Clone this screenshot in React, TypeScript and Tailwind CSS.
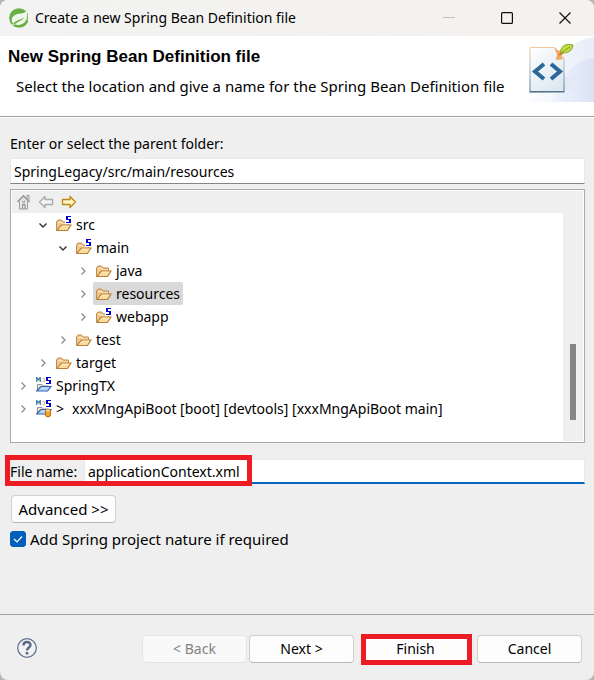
import { useState } from "react";
import type { ReactNode } from "react";

type Kind = "folder" | "source" | "project" | "database";

type Node = { name: string; level: number; kind: Kind; open?: boolean; changed?: boolean };

const nodes: Node[] = [
  { name: "src", level: 1, kind: "source", open: true },
  { name: "main", level: 2, kind: "source", open: true },
  { name: "java", level: 3, kind: "folder" },
  { name: "resources", level: 3, kind: "folder" },
  { name: "webapp", level: 3, kind: "source" },
  { name: "test", level: 2, kind: "folder" },
  { name: "target", level: 1, kind: "folder" },
  { name: "SpringTX", level: 0, kind: "project" },
  { name: "xxxMngApiBoot [boot] [devtools] [xxxMngApiBoot main]", level: 0, kind: "database", changed: true },
];

const indents = ["pl-[3px]", "pl-[23px]", "pl-[43px]", "pl-[63px]"];

function SpringLogo() {
  return (
    <svg width="20" height="20" viewBox="0 0 20 20" aria-hidden="true">
      <circle cx="10" cy="10" r="9.8" fill="#68b043" />
      <path d="M17.500 2.500C16 4.800 14 5.300 11.500 5.500C7 6 3.500 7.500 2.800 11C2.500 13 3 14.300 4.300 15.300C7 12.700 11 12.200 15.500 9.300C13 12.800 8.500 14 5.500 16.300C9 17.800 14 16.800 16.300 13.500C18.800 10 18.500 6 17.500 2.500Z" fill="#f1f7ec" />
      <path d="M18.200 1.500L20 4V14L18.500 12C19.500 8 19 5 18.200 1.500Z" fill="#f1f7ec" />
      <circle cx="4.300" cy="16.300" r="0.900" fill="#f1f7ec" />
    </svg>
  );
}

function Banner() {
  return (
    <svg width="74" height="66" viewBox="0 0 74 66" className="shrink-0" aria-hidden="true">
      <defs>
        <linearGradient id="sky" x1="0" x2="1">
          <stop offset="0" stopColor="#fff" />
          <stop offset="1" stopColor="#d9e2f6" />
        </linearGradient>
        <linearGradient id="sweep" x1="0" x2="1">
          <stop offset="0" stopColor="#edf1fb" />
          <stop offset="1" stopColor="#d5dff4" />
        </linearGradient>
        <linearGradient id="page" x1="0" y1="0" x2="0.700" y2="1">
          <stop offset="0" stopColor="#fff" />
          <stop offset="1" stopColor="#dde8f1" />
        </linearGradient>
        <linearGradient id="edge" x1="0" y1="0" x2="0" y2="1">
          <stop offset="0" stopColor="#f2c99b" />
          <stop offset="0.500" stopColor="#9fb5c5" />
          <stop offset="1" stopColor="#54768c" />
        </linearGradient>
        <linearGradient id="shade" x1="0" x2="1">
          <stop offset="0" stopColor="#9c98b8" />
          <stop offset="1" stopColor="#e4e5f2" stopOpacity="0" />
        </linearGradient>
      </defs>
      <path d="M0 66C22 61 29 45 38 28C47 11 59 3 74 1V66Z" fill="url(#sky)" opacity="0.650" />
      <path d="M32 66C38 43 53 24 74 22V66Z" fill="url(#sweep)" opacity="0.700" />
      <path d="M8 57L44 41H63V50Q46 58 8 57Z" fill="url(#shade)" opacity="0.500" />
      <path d="M10 11.500H35L44 22V55.500H10Z" fill="url(#page)" stroke="url(#edge)" />
      <path d="M9.500 56H44.500" stroke="#54768c" />
      <path d="M24 28L15 35.500L24 43M31 28L40 35.500L31 43" stroke="#2c679c" strokeWidth="4" fill="none" />
      <path d="M34 11L38 15L42 13.500L44 17L41 20L43 23L36 24L37 18Z" fill="#f5a45a" />
      <path d="M39 19L52 11" stroke="#d2783a" strokeWidth="1.500" />
      <path d="M40.500 16.500C41 8.500 47 7.500 53 9C52 15 48 18 40.500 16.500Z" fill="#c3dc45" stroke="#86a725" />
      <path d="M42 16L50 11" stroke="#85a524" />
    </svg>
  );
}

function FolderShape() {
  return (
    <>
      <path d="M.5 14V6L2 4H5.500L7 6H12.500V9" fill="#f0c78f" stroke="#c08a48" />
      <path d="M2 6.500H6.500V8H12" stroke="#fbe6c0" fill="none" />
      <path d="M1 14.500L5.500 9H15L11.500 14.500Z" fill="#fadd9c" stroke="#b97f38" strokeWidth="1.200" />
      <path d="M3 13.300L6 10.200H13" stroke="#fff0c7" strokeWidth="0.800" fill="none" />
    </>
  );
}

function SpringMark({ x }: { x: number }) {
  return (
    <>
      <rect x={x - 1} y="0" width="7" height="8" fill="#fff" />
      <g transform={`translate(${x} 0)`} fill="#0000c8" shapeRendering="crispEdges">
        <rect x="0" y="0" width="5" height="1" />
        <rect x="0" y="0" width="2" height="4" />
        <rect x="0" y="3" width="5" height="1" />
        <rect x="3" y="3" width="2" height="4" />
        <rect x="0" y="6" width="5" height="1" />
      </g>
    </>
  );
}

function NodeIcon({ kind }: { kind: Kind }) {
  if (kind === "folder" || kind === "source") {
    return (
      <svg width="16" height="18" viewBox="0 0 16 18" aria-hidden="true" className="shrink-0">
        <FolderShape />
        {kind === "source" && <SpringMark x={10} />}
      </svg>
    );
  }
  return (
    <svg width="16" height="18" viewBox="0 0 16 18" aria-hidden="true" className="shrink-0">
      <path d="M1.500 14V7.500H6L7.500 9H12.500V10" fill="#f7e5bd" stroke="#8894ad" />
      <path d="M.5 14L5 9.500H15L11.500 14Z" fill="#b4d9fa" stroke="#3d5fb2" strokeWidth="1.200" />
      <path d="M.75 5V.5L2.500 2.800L4.250 .5V5" fill="none" stroke="#387c9e" strokeWidth="1.300" />
      <path d="M6.500 1.500H8.500V4.500M6.500 4.500H8.500" fill="none" stroke="#d9bd90" />
      <SpringMark x={10} />
      {kind === "database" && (
        <>
          <rect x="9.500" y="9.500" width="5" height="7" rx="1.500" fill="#f2a52b" stroke="#bd6d12" />
          <ellipse cx="12" cy="10.500" rx="1.800" ry="0.900" fill="#ffe2a0" />
        </>
      )}
    </svg>
  );
}

function Arrow({ back = false }: { back?: boolean }) {
  return (
    <svg width="16" height="14" viewBox="0 0 16 14" aria-hidden="true">
      <path
        d={back ? "M1.500 7L7 1.500V4.500H14.500V9.500H7V12.500Z" : "M14.500 7L9 1.500V4.500H1.500V9.500H9V12.500Z"}
        fill={back ? "#f5f5f5" : "#fff4c2"}
        stroke={back ? "#aaa" : "#bd8516"}
        strokeWidth="1.300"
        strokeLinejoin="round"
      />
    </svg>
  );
}

function Home() {
  return (
    <svg width="14" height="16" viewBox="0 0 14 16" aria-hidden="true" fill="none" stroke="#989898">
      <path d="M.5 8L6.500 2L12.500 8" strokeWidth="1.600" />
      <path d="M2.500 7.500V15H10.500V7.500M10 5V1.500H12V7" />
      <path d="M4 8L6.500 5.500L9 8" stroke="#c4c4c4" />
      <path d="M5.500 15V10.500H8V15M5.500 8H8" strokeWidth="1.300" />
    </svg>
  );
}

function Annotation({ className }: { className: string }) {
  return <span aria-hidden="true" className={`pointer-events-none absolute border-5 border-[#ed1c24] ${className}`} />;
}

function DialogButton({ children, disabled = false }: { children: ReactNode; disabled?: boolean }) {
  return (
    <button
      type="button"
      disabled={disabled}
      className="h-7 w-[105px] rounded border border-[#d0d0d0] border-b-[#b8b8b8] bg-[#fdfdfd] text-black disabled:border-[#e5e5e5] disabled:bg-[#f9f9f9] disabled:text-[#838383]"
    >
      {children}
    </button>
  );
}

export default function App() {
  const [selected, setSelected] = useState("resources");

  return (
    <div className="min-h-screen bg-[#b5b5b5] font-['Noto_Sans','Noto_Sans_CJK_KR',sans-serif] text-[14px] leading-5 text-black">
      <div className="flex min-h-screen flex-col overflow-hidden rounded-lg bg-[#efefef]">
        <header className="flex h-9 items-center bg-linear-to-r from-[#f2f3f2] to-[#f5f1ef] pl-[9px]">
          <SpringLogo />
          <h1 className="ml-[6px] flex-1">Create a new Spring Bean Definition file</h1>
          <button type="button" aria-label="Minimize" disabled className="flex h-8 w-[58px] items-center justify-center">
            <svg width="12" height="12" aria-hidden="true"><path d="M0 5.500H12" stroke="#c0bebd" /></svg>
          </button>
          <button type="button" aria-label="Maximize" className="flex h-8 w-[58px] items-center justify-center">
            <svg width="12" height="12" fill="none" aria-hidden="true"><rect x=".6" y=".6" width="10.800" height="10.800" rx="1" stroke="#111" strokeWidth="1.200" /></svg>
          </button>
          <button type="button" aria-label="Close" className="flex h-8 w-[58px] items-center justify-center">
            <svg width="12" height="12" aria-hidden="true"><path d="M.5 .5L11.500 11.500M11.500 .5L.5 11.500" stroke="#111" strokeWidth="1.200" /></svg>
          </button>
        </header>

        <section className="flex h-[81px] items-start border-b border-[#a0a0a0] bg-white">
          <div className="flex-1 pt-[11px] pl-2">
            <h2 className="font-['Liberation_Sans',Arial,sans-serif] text-[17px] font-bold whitespace-nowrap">New Spring Bean Definition file</h2>
            <p className="mt-[9px] pl-2 text-[15px] whitespace-nowrap">Select the location and give a name for the Spring Bean Definition file</p>
          </div>
          <Banner />
        </section>

        <main className="flex flex-1 flex-col border-t border-white pt-4 pr-[9px] pb-16 pl-[10px]">
          <label htmlFor="parent-folder">Enter or select the parent folder:</label>
          <input
            id="parent-folder"
            defaultValue="SpringLegacy/src/main/resources"
            className="mt-1 h-[26px] w-full border border-[#e7e7e7] border-b-[#858585] bg-white px-[3px] outline-none"
          />

          <div className="mt-[5px] border border-[#a9a9b0] bg-white p-px">
            <div className="flex h-[22px] items-center gap-[7px] bg-[#efefef] pl-[5px]">
              <button type="button" aria-label="Home" disabled><Home /></button>
              <button type="button" aria-label="Back" disabled><Arrow back /></button>
              <button type="button" aria-label="Forward"><Arrow /></button>
            </div>
            <div className="flex">
              <ul role="tree" aria-label="Folders" className="flex-1 pb-[21px]">
                {nodes.map((node) => (
                  <li
                    key={node.name}
                    role="treeitem"
                    aria-selected={selected === node.name}
                    aria-expanded={!!node.open}
                    onClick={() => setSelected(node.name)}
                    className={`flex h-[23px] items-center ${indents[node.level]}`}
                  >
                    <svg width="16" height="10" viewBox="0 0 16 10" fill="none" aria-hidden="true" className="shrink-0">
                      {node.open
                        ? <path d="M4.500 3.500L8 7L11.500 3.500" stroke="#333" strokeWidth="1.400" />
                        : <path d="M6.500 1.500L10 5L6.500 8.500" stroke="#888" strokeWidth="1.200" />}
                    </svg>
                    <span className={`ml-[2px] flex h-[23px] items-center gap-1 rounded-xs px-[3px] whitespace-nowrap ${selected === node.name ? "bg-[#d9d9d9]" : ""}`}>
                      <NodeIcon kind={node.kind} />
                      {node.changed && <span className="mr-1">&gt;</span>}
                      <span>{node.name}</span>
                    </span>
                  </li>
                ))}
              </ul>
              <div className="flex w-5 flex-col items-center bg-[#efefef] pt-[131px]">
                <div className="h-[76px] w-[6px] bg-[#858585]" />
              </div>
            </div>
          </div>

          <div className="relative mt-4 flex items-center">
            <label htmlFor="file-name" className="w-[74px] whitespace-nowrap">File name:</label>
            <input
              id="file-name"
              defaultValue="applicationContext.xml"
              className="h-[25px] min-w-0 flex-1 border border-[#e5e9ec] border-b-2 border-b-[#0067c0] bg-white px-[3px] outline-none"
            />
            <Annotation className="-top-1 -left-[5px] h-[31px] w-[247px]" />
          </div>

          <button type="button" className="mt-[11px] ml-px h-7 w-[105px] rounded border border-[#d0d0d0] border-b-[#b8b8b8] bg-[#fdfdfd] text-[15px]">
            Advanced &gt;&gt;
          </button>

          <label className="mt-[6px] flex items-center gap-1 self-start text-[15px]">
            <span className="relative flex size-4">
              <input type="checkbox" defaultChecked className="peer size-4 appearance-none rounded-[3px] border border-[#858585] bg-white checked:border-[#005fb8] checked:bg-[#005fb8]" />
              <svg viewBox="0 0 16 16" fill="none" className="pointer-events-none absolute inset-0 hidden peer-checked:block" aria-hidden="true">
                <path d="M4 8L7 11L12 5.500" stroke="#fff" strokeWidth="1.200" />
              </svg>
            </span>
            Add Spring project nature if required
          </label>
        </main>

        <footer className="flex items-center border-t border-[#a0a0a0] pr-3 pb-[17px] pl-[17px]">
          <button type="button" aria-label="Help" className="mt-[18px]">
            <svg width="20" height="20" viewBox="0 0 20 20" fill="none" aria-hidden="true">
              <circle cx="10" cy="10" r="9.300" fill="#f3f3f3" stroke="#65748f" strokeWidth="1.300" />
              <path d="M6.500 7.500C6.500 3 13.500 3 13.500 7C13.500 9.500 10 9.500 10 12.500" stroke="#596883" strokeWidth="2.400" />
              <path d="M10 14V16.500" stroke="#596883" strokeWidth="2.600" />
            </svg>
          </button>
          <div className="mt-5 ml-auto flex items-center">
            <DialogButton disabled>&lt; Back</DialogButton>
            <div className="ml-[2px]"><DialogButton>Next &gt;</DialogButton></div>
            <div className="relative mx-[9px]">
              <DialogButton>Finish</DialogButton>
              <Annotation className="-top-px -right-1 -left-[2px] h-[31px]" />
            </div>
            <DialogButton>Cancel</DialogButton>
          </div>
        </footer>
      </div>
    </div>
  );
}
